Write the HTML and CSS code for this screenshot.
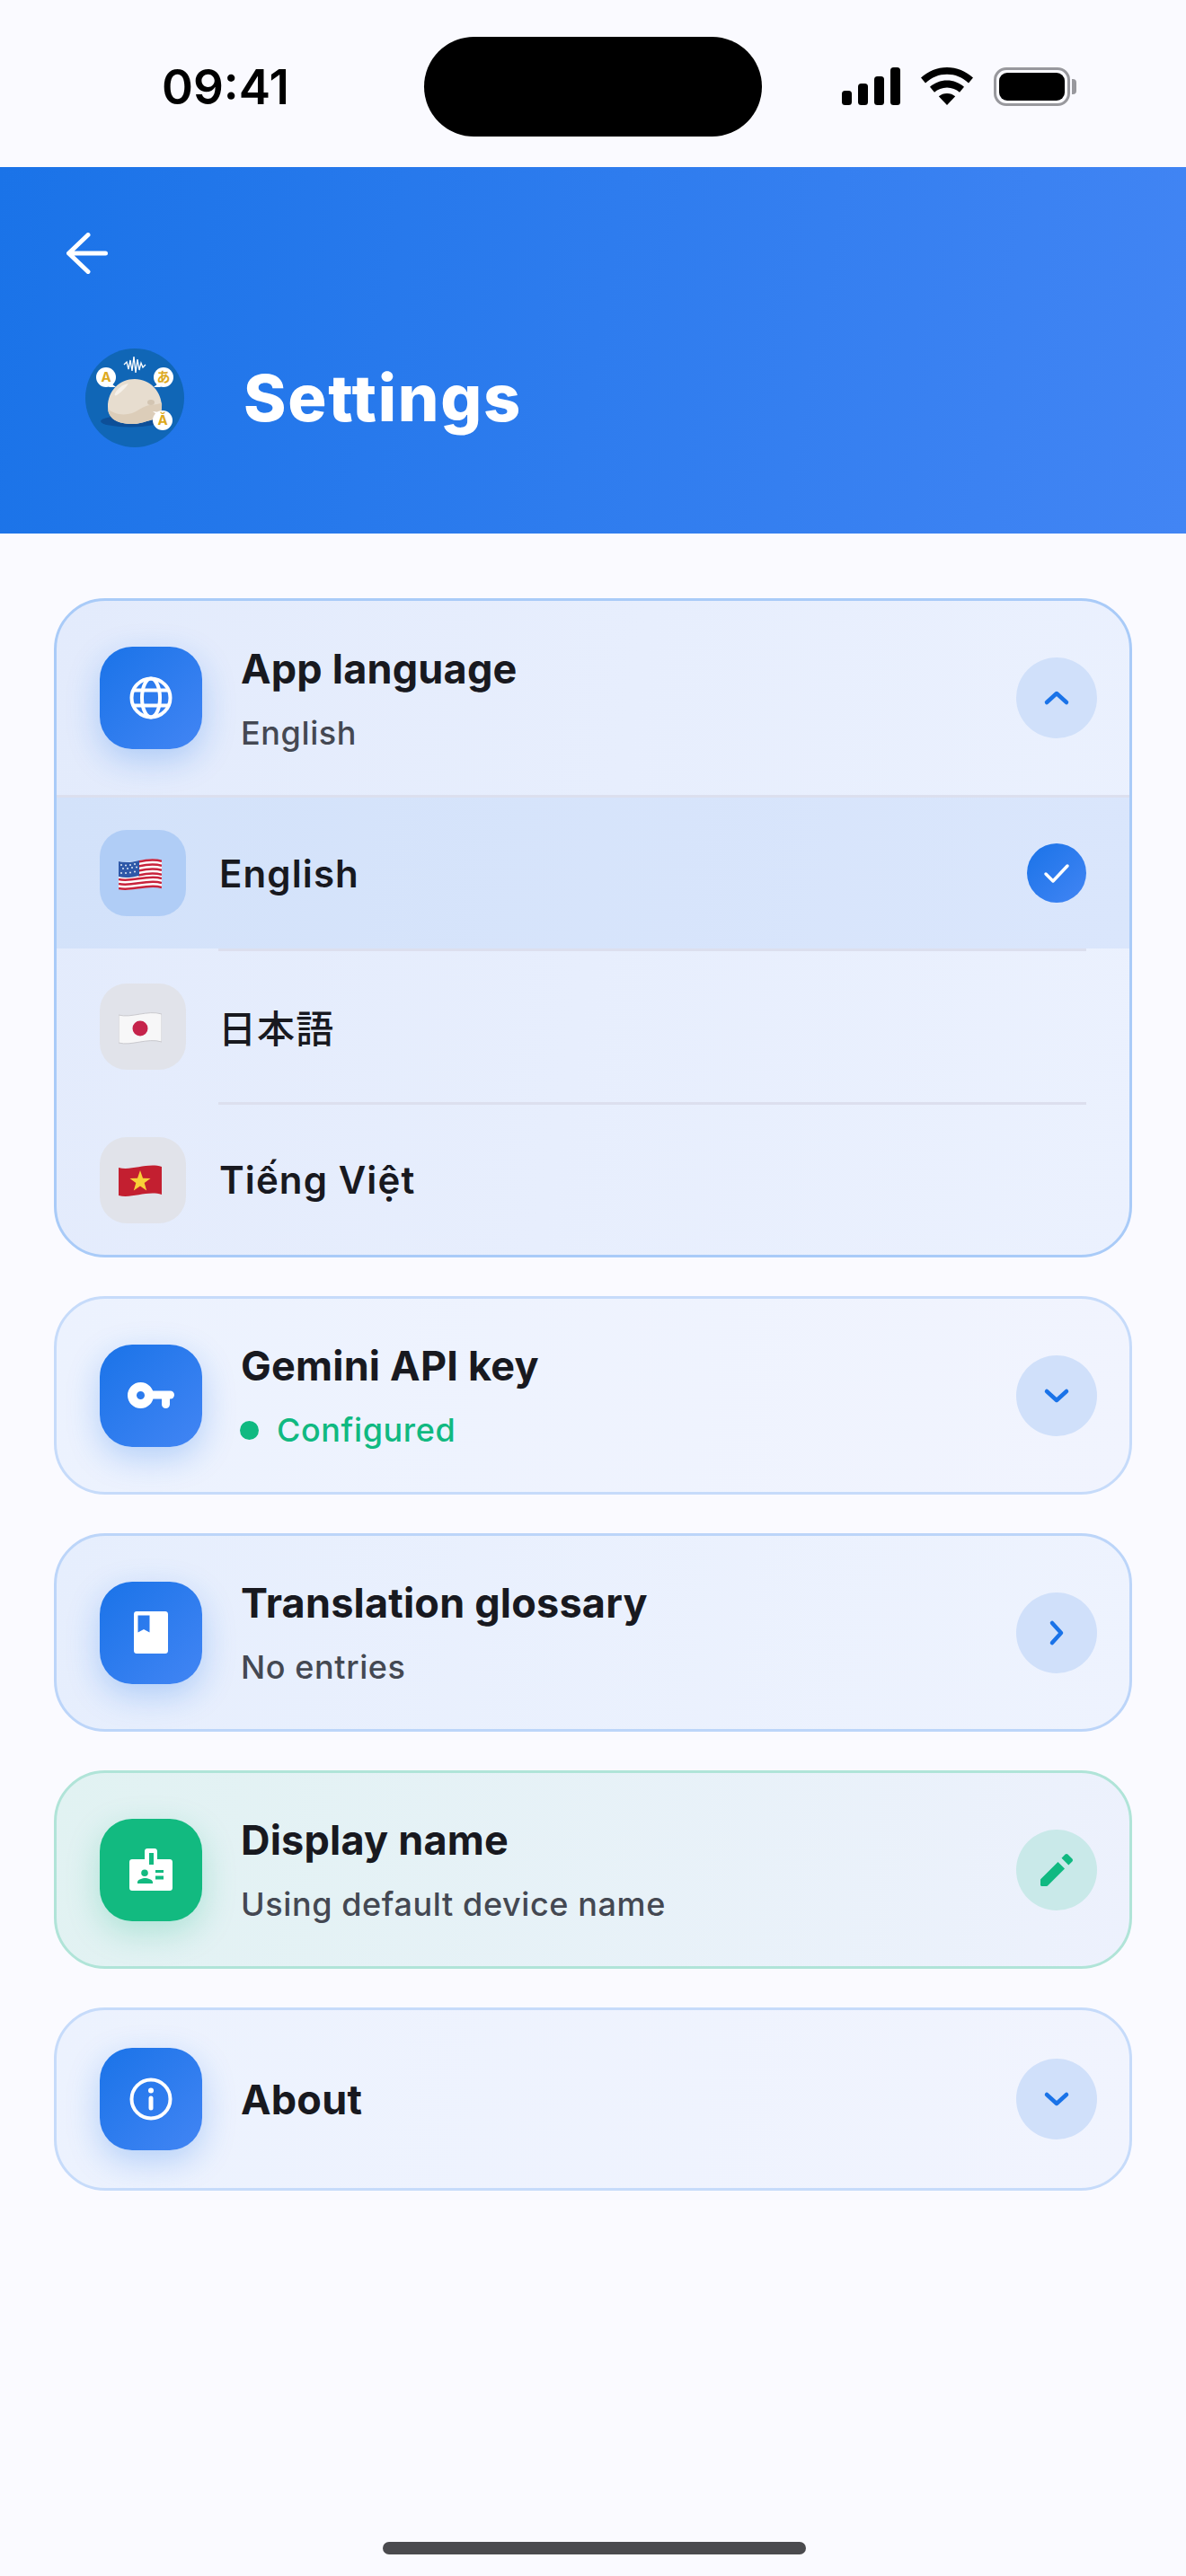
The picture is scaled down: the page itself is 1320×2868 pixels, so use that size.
FILE: index.html
```html
<!DOCTYPE html>
<html lang="en">
<head>
    <meta charset="UTF-8">
    <meta name="viewport" content="width=device-width, initial-scale=1.0">
    <title>Settings</title>
    <link rel="stylesheet" href="styles.css">
</head>
<body>
    <div class="status-bar">
        <span class="time">09:41</span>
        <div class="island"></div>
        <div class="status-icons">
            <svg width="65" height="42" viewBox="0 0 65 42"><rect x="0" y="26" width="11" height="16" rx="3.5"/><rect x="18" y="18" width="11" height="24" rx="3.5"/><rect x="36" y="10" width="11" height="32" rx="3.5"/><rect x="54" y="0" width="11" height="42" rx="3.5"/></svg>
            <svg width="58" height="42" viewBox="0 0 58 42"><path d="M29 0C18 0 8 4.300 0 11.500l5 6C12 11 20 7.800 29 7.800S46 11 53 17.500l5-6C50 4.300 40 0 29 0z"/><path d="M29 14.500c-7.200 0-13.800 2.700-19 7.200l5 6c3.700-3.200 8.600-5.300 14-5.300s10.300 2.100 14 5.300l5-6c-5.200-4.500-11.800-7.200-19-7.200z"/><path d="M29 29c-3.500 0-6.700 1.200-9.200 3.300L29 42l9.200-9.700C35.700 30.200 32.500 29 29 29z"/></svg>
            <div class="battery"><div class="battery-fill"></div></div>
        </div>
    </div>

    <header class="top">
        <svg class="back" width="46" height="46" viewBox="0 0 46 46" fill="none" stroke="#fff" stroke-width="5" stroke-linecap="round" stroke-linejoin="round"><path d="M43.500 23H3M24 2.500 2.500 23 24 43.500"/></svg>
        <div class="title-row">
            <svg class="logo" width="110" height="110" viewBox="0 0 110 110">
                <circle cx="55" cy="55" r="55" fill="#1066b6"/>
                <ellipse cx="50" cy="81" rx="33" ry="6.500" fill="#0d4f98"/>
                <path d="M25 65C25 47 38 34 55 34S85 48 85 65C85 74 80 78 72 80 64 82 60 84 52 84 36 84 25 78 25 65z" fill="#e7ddcf"/>
                <path d="M25 67C31 73 42 75 52 72 60 69 64 64 72 63 78 62 83 62 85 60 86 74 80 78 72 80 64 82 60 84 52 84 37 84 26 79 25 67z" fill="#dccdb9"/>
                <path d="M33 50C36 44 42 40 48 39 45 44 39 49 35 52 33 53 32 52 33 50z" fill="#f6f1ea"/>
                <ellipse cx="73" cy="60" rx="4" ry="3" fill="#d3c5b2"/>
                <polyline points="43,18 46,15 48,23 50,13 52,25 54,9 56,27 58,12 60,24 62,16 64,21 67,18" fill="none" stroke="#fff" stroke-width="1.300"/>
                <circle cx="23" cy="32" r="11" fill="#fff"/><path d="M29 39l5 4-8 0z" fill="#fff"/>
                <circle cx="87" cy="32" r="11" fill="#fff"/><path d="M81 39l-5 4 8 0z" fill="#fff"/>
                <circle cx="86" cy="80" r="11" fill="#fff"/><path d="M79 73l-4-3 7 1z" fill="#fff"/>
                <text x="23" y="37" class="logo-letter">A</text>
                <text x="87" y="37" class="logo-letter">あ</text>
                <text x="86" y="85" class="logo-letter">Ă</text>
            </svg>
            <h1>Settings</h1>
        </div>
    </header>

    <div class="container">
        <div class="card open">
            <div class="card-head">
                <div class="icon-box">
                    <svg width="48" height="48" viewBox="0 0 48 48" fill="none" stroke="#fff" stroke-width="4"><circle cx="24" cy="24" r="21.500"/><ellipse cx="24" cy="24" rx="10" ry="21.500"/><path d="M4 15.500h40M4 32.500h40"/></svg>
                </div>
                <div class="card-text">
                    <h3>App language</h3>
                    <p class="sub">English</p>
                </div>
                <div class="round-btn">
                    <svg width="30" height="18" viewBox="0 0 30 18" fill="none" stroke="#1a73e8" stroke-width="4.500" stroke-linecap="round" stroke-linejoin="round"><path d="M4 14 15 4l11 10"/></svg>
                </div>
            </div>
            <div class="lang-row selected">
                <div class="flag-box">
                    <svg width="48" height="36" viewBox="0 0 48 36">
                        <path d="M0 3c14 4 32-6 48-1v31c-16-5-34 5-48 1z" fill="#fff"/>
                        <g fill="none" stroke="#c8233c" stroke-width="2.500">
                            <path d="M22 3.500c9-2 18-3 26-.6"/><path d="M22 8.500c9-2 18-3 26-.6"/><path d="M22 13.500c9-2 18-3 26-.6"/><path d="M22 18.500c9-2 18-3 26-.6"/>
                            <path d="M0 23c14 4 32-6 48-1"/><path d="M0 28c14 4 32-6 48-1"/><path d="M0 33c14 4 32-6 48-1"/>
                        </g>
                        <path d="M0 3c7 2 15 1 23-1v17C15 21 7 22 0 20z" fill="#2e58a8"/>
                        <g fill="#dfe8f5"><circle cx="3" cy="7" r="1"/><circle cx="8" cy="7.500" r="1"/><circle cx="13" cy="7" r="1"/><circle cx="18" cy="6" r="1"/><circle cx="5" cy="11" r="1"/><circle cx="10" cy="11" r="1"/><circle cx="15" cy="10" r="1"/><circle cx="20" cy="9.500" r="1"/><circle cx="3" cy="16" r="1"/><circle cx="8" cy="16" r="1"/><circle cx="13" cy="15.500" r="1"/><circle cx="18" cy="14.500" r="1"/></g>
                    </svg>
                </div>
                <span class="lang-name">English</span>
                <div class="check">
                    <svg width="30" height="24" viewBox="0 0 30 24" fill="none" stroke="#fff" stroke-width="3.500" stroke-linecap="round" stroke-linejoin="round"><path d="M3 13l8 8L27 4"/></svg>
                </div>
            </div>
            <div class="lang-row">
                <div class="flag-box">
                    <svg width="48" height="36" viewBox="0 0 48 36">
                        <path d="M0 3c14 4 32-6 48-1v31c-16-5-34 5-48 1z" fill="#f7f7f8" stroke="#c9c9ce"/>
                        <circle cx="24" cy="18" r="8.500" fill="#c5234b"/>
                    </svg>
                </div>
                <span class="lang-name cjk">日本語</span>
            </div>
            <div class="lang-row last">
                <div class="flag-box">
                    <svg width="48" height="36" viewBox="0 0 48 36">
                        <path d="M0 3c14 4 32-6 48-1v31c-16-5-34 5-48 1z" fill="#c31f30"/>
                        <path d="M24 6l3 8.800 8.500.1-6.800 5.200 2.500 8.400L24 23.400l-7.200 5.100 2.500-8.400-6.800-5.200 8.500-.1z" fill="#f8d038"/>
                    </svg>
                </div>
                <span class="lang-name">Tiếng Việt</span>
            </div>
        </div>

        <div class="card faint">
            <div class="card-head">
                <div class="icon-box">
                    <svg width="52" height="29" viewBox="0 0 52 29" fill="#fff"><circle cx="14.500" cy="14.500" r="9.500" fill="none" stroke="#fff" stroke-width="10"/><rect x="24" y="9.500" width="28" height="9" rx="4.500"/><rect x="38" y="10" width="9" height="19" rx="4.500"/></svg>
                </div>
                <div class="card-text">
                    <h3>Gemini API key</h3>
                    <p class="sub ok"><span class="dot"></span>Configured</p>
                </div>
                <div class="round-btn">
                    <svg width="30" height="18" viewBox="0 0 30 18" fill="none" stroke="#1a73e8" stroke-width="4.500" stroke-linecap="round" stroke-linejoin="round"><path d="M4 4l11 10L26 4"/></svg>
                </div>
            </div>
        </div>

        <div class="card">
            <div class="card-head">
                <div class="icon-box">
                    <svg width="38" height="47" viewBox="0 0 38 47" fill="#fff"><path fill-rule="evenodd" d="M3 0h32c1.700 0 3 1.300 3 3v41c0 1.700-1.300 3-3 3H3c-1.700 0-3-1.300-3-3V3c0-1.700 1.300-3 3-3zm1.500 4.500v19l6.500-3.500 6.500 3.500v-19z"/></svg>
                </div>
                <div class="card-text">
                    <h3>Translation glossary</h3>
                    <p class="sub">No entries</p>
                </div>
                <div class="round-btn">
                    <svg width="18" height="30" viewBox="0 0 18 30" fill="none" stroke="#1a73e8" stroke-width="4.500" stroke-linecap="round" stroke-linejoin="round"><path d="M4 4l10 11L4 26"/></svg>
                </div>
            </div>
        </div>

        <div class="card green">
            <div class="card-head">
                <div class="icon-box">
                    <svg width="48" height="47" viewBox="0 0 48 47"><path fill="#fff" fill-rule="evenodd" d="M20 0h8c1.700 0 3 1.300 3 3v9h14c1.700 0 3 1.300 3 3v29c0 1.700-1.300 3-3 3H3c-1.700 0-3-1.300-3-3V15c0-1.700 1.300-3 3-3h14V3c0-1.700 1.300-3 3-3zm2 5v13h5V5zM17 23.500a3.800 3.800 0 1 0 0 7.600 3.800 3.800 0 0 0 0-7.600zM9 39h17v-1.500c0-3-5.700-4.500-8.500-4.500S9 34.500 9 37.500zM29 24v3h9v-3zm0 6.500v4h9v-4z"/></svg>
                </div>
                <div class="card-text">
                    <h3>Display name</h3>
                    <p class="sub">Using default device name</p>
                </div>
                <div class="round-btn green-btn">
                    <svg width="36" height="36" viewBox="0 0 36 36" fill="#10b981"><path d="M0 29v5.500c0 .8.700 1.500 1.500 1.500H7c.4 0 .8-.2 1-.4L27 16.500 19.500 9 .4 28c-.3.300-.4.600-.4 1zM35.400 8.400c.8-.8.800-2 0-2.800L30.400.6c-.8-.8-2-.8-2.800 0L23.500 4.700 31.300 12.500z"/></svg>
                </div>
            </div>
        </div>

        <div class="card faint">
            <div class="card-head">
                <div class="icon-box">
                    <svg width="48" height="48" viewBox="0 0 48 48" fill="none" stroke="#fff"><circle cx="24" cy="24" r="21.500" stroke-width="4"/><path d="M24 23v11" stroke-width="5" stroke-linecap="round"/><circle cx="24" cy="14.500" r="3" fill="#fff" stroke="none"/></svg>
                </div>
                <div class="card-text">
                    <h3>About</h3>
                </div>
                <div class="round-btn">
                    <svg width="30" height="18" viewBox="0 0 30 18" fill="none" stroke="#1a73e8" stroke-width="4.500" stroke-linecap="round" stroke-linejoin="round"><path d="M4 4l11 10L26 4"/></svg>
                </div>
            </div>
        </div>
    </div>

    <div class="home-bar"></div>
</body>
</html>
```

FILE: styles.css
```css
* {
    box-sizing: border-box;
}
body {
    font-family: Inter, "Noto Sans CJK JP", sans-serif;
    background-color: #fafaff;
    color: #18191f;
    margin: 0;
    padding: 0;
    height: 2868px;
    position: relative;
    overflow: hidden;
}
.status-bar {
    height: 186px;
    display: flex;
    align-items: center;
    justify-content: space-between;
    padding: 0 129px 0 180px;
}
.time {
    font-size: 53px;
    font-weight: 600;
    color: #000;
    line-height: 1;
    margin-top: 8px;
}
.island {
    position: absolute;
    left: 472px;
    top: 41px;
    width: 376px;
    height: 111px;
    background-color: #000;
    border-radius: 56px;
}
.status-icons {
    display: flex;
    align-items: center;
    gap: 23px;
    margin-top: 6px;
}
.battery {
    width: 85px;
    height: 43px;
    border: 3px solid #98989d;
    border-radius: 14px;
    padding: 3px;
    position: relative;
}
.battery::after {
    content: "";
    position: absolute;
    right: -10px;
    top: 10px;
    width: 5px;
    height: 17px;
    border-radius: 0 4px 4px 0;
    background-color: #98989d;
}
.battery-fill {
    width: 100%;
    height: 100%;
    background-color: #000;
    border-radius: 9px;
}
.top {
    height: 408px;
    background: linear-gradient(100deg, #1a73e8, #4285f4);
    padding: 73px 0 0 74px;
}
.back {
    display: block;
}
.title-row {
    display: flex;
    align-items: center;
    gap: 66px;
    margin: 83px 0 0 21px;
}
.logo-letter {
    font-size: 15px;
    font-weight: 700;
    fill: #dda91e;
    text-anchor: middle;
    font-family: Inter, "Noto Sans CJK JP", sans-serif;
}
h1 {
    margin: 0;
    color: #fff;
    font-size: 72px;
    font-weight: 800;
    line-height: 1;
    letter-spacing: 1.7px;
}
.container {
    padding: 72px 60px 0 60px;
    display: flex;
    flex-direction: column;
    gap: 43px;
}
.card {
    border: 3px solid #bcd5f9;
    border-radius: 57px;
    background: linear-gradient(100deg, #e6eefd, #eef3fe);
    overflow: hidden;
}
.card.open {
    border-color: #a9cbf8;
    background: linear-gradient(100deg, #e3ebfc, #ebf1fe);
}
.card.faint {
    border-color: #c6dbfa;
    background: linear-gradient(100deg, #ecf2fe, #f1f4fe);
}
.card.green {
    border-color: #b0e4d8;
    background: linear-gradient(100deg, #e1f2f2, #edf1fd);
}
.card-head {
    display: flex;
    align-items: center;
    padding: 42px 36px 42px 48px;
}
.open .card-head {
    height: 219px;
    border-bottom: 3px solid #dcdfee;
}
.icon-box {
    width: 114px;
    height: 114px;
    flex-shrink: 0;
    border-radius: 36px;
    background: linear-gradient(135deg, #1a73e8, #4285f4);
    box-shadow: 0 12px 36px rgba(26, 115, 232, 0.27);
    display: flex;
    align-items: center;
    justify-content: center;
}
.green .icon-box {
    background: #12ba80;
    box-shadow: 0 12px 36px rgba(16, 185, 129, 0.25);
}
.card-text {
    flex: 1;
    margin-left: 43px;
}
h3 {
    margin: 0;
    font-size: 45px;
    font-weight: 700;
    line-height: 65px;
    letter-spacing: 0.2px;
}
.sub {
    margin: 12px 0 0;
    font-size: 36px;
    font-weight: 500;
    line-height: 54px;
    color: #444852;
    letter-spacing: 0.6px;
}
.ok {
    color: #10b981;
    display: flex;
    align-items: center;
    margin-left: -1px;
}
.dot {
    width: 21px;
    height: 21px;
    border-radius: 50%;
    background-color: #10b981;
    margin-right: 20px;
}
.round-btn {
    width: 90px;
    height: 90px;
    border-radius: 50%;
    flex-shrink: 0;
    background-color: #d0e0fa;
    display: flex;
    align-items: center;
    justify-content: center;
}
.green-btn {
    background-color: #c9e9e9;
}
.lang-row {
    display: flex;
    align-items: center;
    height: 171px;
    padding: 0 48px 3px 48px;
    position: relative;
}
.lang-row::after {
    content: "";
    position: absolute;
    left: 180px;
    right: 48px;
    bottom: 0;
    height: 3px;
    background-color: #dcdfee;
}
.lang-row.last::after {
    display: none;
}
.lang-row.last {
    height: 167px;
    padding-bottom: 0;
}
.selected {
    background: linear-gradient(100deg, #d3e2fa, #dae6fc);
    background-repeat: no-repeat;
    background-size: 100% 168px;
}
.flag-box {
    width: 96px;
    height: 96px;
    border-radius: 30px;
    flex-shrink: 0;
    background-color: #e1e3ea;
    display: flex;
    align-items: center;
    justify-content: center;
}
.flag-box svg {
    margin: 3px 6px 0 0;
}
.selected .flag-box {
    background-color: #b0cdf6;
}
.lang-name {
    flex: 1;
    margin-left: 37px;
    font-size: 42px;
    font-weight: 600;
    letter-spacing: 1.1px;
}
.cjk {
    font-weight: 500;
    margin-left: 36px;
    margin-top: -2px;
}
.check {
    width: 66px;
    height: 66px;
    border-radius: 50%;
    background: linear-gradient(135deg, #1a73e8, #4285f4);
    display: flex;
    align-items: center;
    justify-content: center;
}
.home-bar {
    position: absolute;
    left: 426px;
    top: 2830px;
    width: 471px;
    height: 14px;
    border-radius: 7px;
    background-color: #4a4a4e;
}
```
